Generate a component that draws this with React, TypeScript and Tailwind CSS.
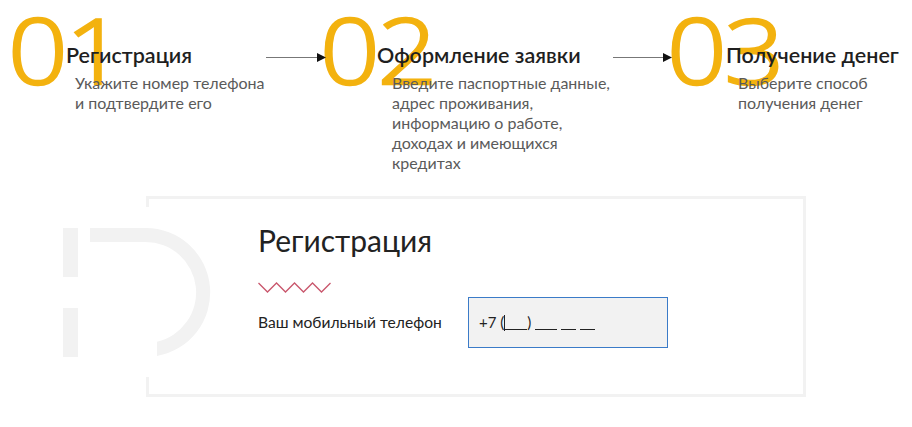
const steps = [
  {
    num: '01',
    title: 'Регистрация',
    desc: ['Укажите номер телефона', 'и подтвердите его'],
    titleMl: 'ml-[57px]',
    descMl: 'ml-[66px]',
    width: 'w-[257px] ml-[9px]',
  },
  {
    num: '02',
    title: 'Оформление заявки',
    desc: ['Введите паспортные данные,', 'адрес проживания,', 'информацию о работе,', 'доходах и имеющихся', 'кредитах'],
    titleMl: 'ml-[56px]',
    descMl: 'ml-[71px]',
    width: 'w-[292px]',
  },
  {
    num: '03',
    title: 'Получение денег',
    desc: ['Выберите способ', 'получения денег'],
    titleMl: 'ml-[58px]',
    descMl: 'ml-[70px]',
    width: 'flex-1',
  },
]

const Arrow = ({ w }: { w: string }) => (
  <div className={`${w} relative z-10 h-[114px] shrink-0`}>
    <div className="absolute left-0 right-[6px] top-[57px] h-px bg-[#777]" />
    <svg className="absolute right-0 top-[53px]" width="9" height="9" viewBox="0 0 9 9">
      <path d="M0 0 L9 4.5 L0 9 Z" fill="#111" />
    </svg>
  </div>
)

const Step = ({ s }: { s: (typeof steps)[number] }) => (
  <div className={`${s.width} relative shrink-0`}>
    <div className="absolute left-[-1px] top-[3px] origin-left scale-x-[1.15] font-['Open_Sans',sans-serif] text-[91px] leading-[92px] font-light text-[#f3b20f] [-webkit-text-stroke:2.5px_#f3b20f] tracking-[-2px] select-none">
      {s.num}
    </div>
    <div className={`relative z-10 ${s.titleMl} mt-[43px] text-[21.5px] leading-[24px] font-semibold text-[#1f1f1f] whitespace-nowrap`}>
      {s.title}
    </div>
    <div className={`relative z-10 ${s.descMl} mt-[6px] text-[16px] leading-[20px] text-[#5a5a5a]`}>
      {s.desc.map((l) => (
        <div key={l} className="whitespace-nowrap">{l}</div>
      ))}
    </div>
  </div>
)

const Blank = ({ w }: { w: string }) => (
  <span className={`inline-block ${w} h-px bg-[#222] translate-y-[2px]`} />
)

export default function App() {
  return (
    <div className="w-[912px] h-[427px] bg-white overflow-hidden font-['Lato',sans-serif]">
      {/* Steps */}
      <div className="flex h-[196px]">
        <Step s={steps[0]} />
        <Arrow w="w-[60px] -mr-[5px]" />
        <Step s={steps[1]} />
        <Arrow w="w-[59px] -mr-[4px]" />
        <Step s={steps[2]} />
      </div>

      {/* Registration card */}
      <div className="relative ml-[146px] w-[660px] h-[201px] border-[3px] border-[#f2f2f2] pl-[109px] pt-[23px]">
        <svg
          className="absolute -left-[94px] top-px"
          width="160"
          height="180"
          viewBox="55 200 160 180"
        >
          <rect x="145" y="207" width="5" height="170" fill="#fff" />
          <rect x="63" y="228" width="15" height="49" fill="#f2f2f2" />
          <rect x="63" y="308" width="15" height="49" fill="#f2f2f2" />
          <path
            d="M90 228 H145.5 A64.5 64.5 0 0 1 157 356 V341.7 A50.5 50.5 0 0 0 145.5 242 H90 Z"
            fill="#f2f2f2"
          />
        </svg>

        <div className="relative">
          <h1 className="text-[30px] leading-[36px] font-normal text-[#222]">Регистрация</h1>
          <svg className="mt-[24px] block" width="74" height="11" viewBox="0 0 74 11">
            <polyline
              points="0.5,1 9.5,10 18.5,1 27.5,10 36.5,1 45.5,10 54.5,1 63.5,10 72.5,1"
              fill="none"
              stroke="#c9566c"
              strokeWidth="1.3"
            />
          </svg>
          <div className="mt-[4px] flex items-center">
            <label className="w-[210px] text-[15.6px] text-[#222]">Ваш мобильный телефон</label>
            <div className="w-[200px] h-[51px] border border-[#3b7bc8] bg-[#f2f2f2] px-[10px] flex items-center text-[15px] text-[#222]">
              <div className="flex items-baseline whitespace-pre">
                <span>+7 (</span>
                <span className="inline-block w-px h-[16px] bg-[#222] translate-y-[3px]" />
                <Blank w="w-[22px]" />
                <span>) </span>
                <Blank w="w-[22px]" />
                <span> </span>
                <Blank w="w-[15px]" />
                <span> </span>
                <Blank w="w-[15px]" />
              </div>
            </div>
          </div>
        </div>
      </div>
    </div>
  )
}
